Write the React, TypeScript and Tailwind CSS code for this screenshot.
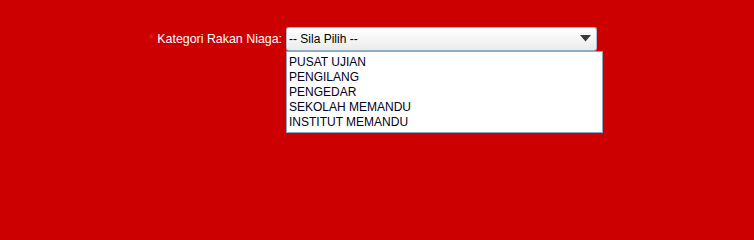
import React from 'react';

const options = ['PUSAT UJIAN', 'PENGILANG', 'PENGEDAR', 'SEKOLAH MEMANDU', 'INSTITUT MEMANDU'];

export default function App() {
    return (
        <div className="min-h-screen h-[200px] w-full bg-[#cc0000] pt-[27px] font-['Liberation_Sans',Arial,sans-serif] text-[12px]">
            <div className="flex items-center">
                <label className="flex w-[282px] items-center justify-end text-[12.4px] text-white">
                    <span className="mr-[4px] text-[#ff1a1a]">*</span>
                    Kategori Rakan Niaga:
                </label>
                <div className="relative ml-[4px]">
                    <div className="flex h-[24px] w-[311px] items-center justify-between rounded-[3px] border border-[#a9bfd0] border-b-[#8fb0c8] bg-gradient-to-b from-white to-[#ebebeb] pl-[2px] pr-[5px] text-black">
                        <span>-- Sila Pilih --</span>
                        <svg width="11" height="7" viewBox="0 0 11 7" className="mb-[1px]">
                            <path d="M0 0h11L5.5 6.5z" fill="#3a3a3a" />
                        </svg>
                    </div>
                    <ul className="absolute left-0 top-[24px] w-[317px] border border-[#8aaac4] bg-white pb-[2px] pl-[2px] pt-[3px] leading-[15px] text-[#000022]">
                        {options.map(opt => (
                            <li key={opt}>{opt}</li>
                        ))}
                    </ul>
                </div>
            </div>
        </div>
    );
}
